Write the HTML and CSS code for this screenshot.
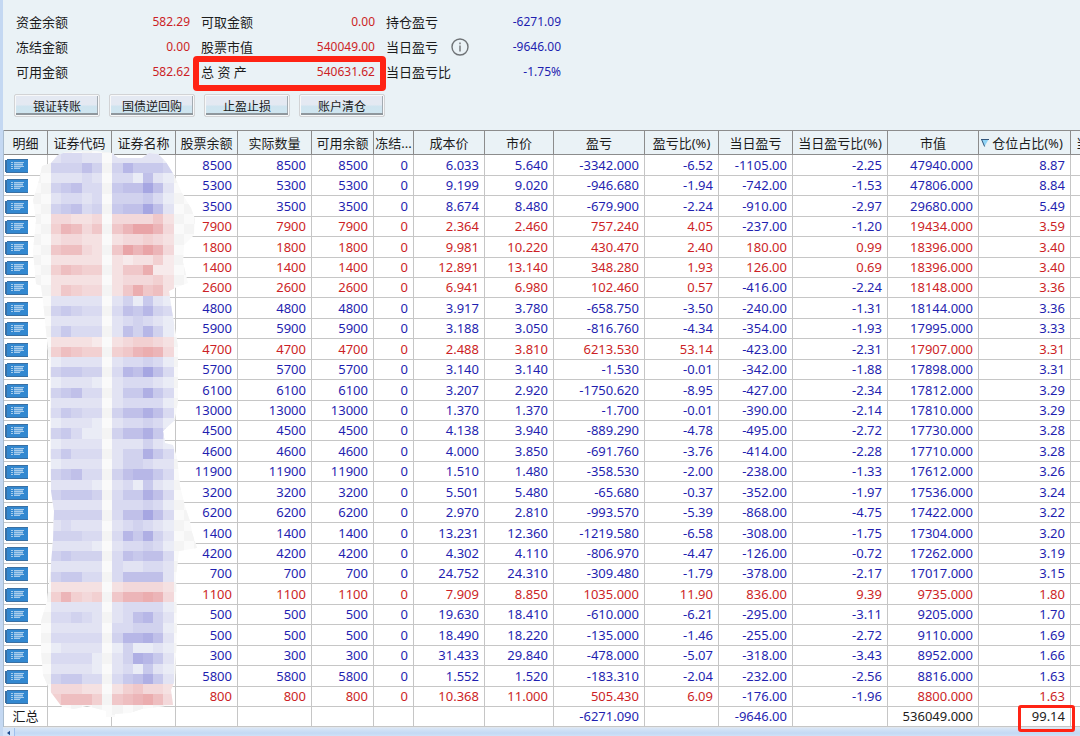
FILE: index.html
```
<!DOCTYPE html>
<html lang="zh-CN">
<head>
<meta charset="utf-8">
<title>资金股份</title>
<link rel="stylesheet" href="styles.css">
</head>
<body>
<svg class="defs" aria-hidden="true">
  <symbol id="detail" viewBox="0 0 23 14">
    <path fill="#3a70a3" d="M0 1h2V0h21v14H1v-1H0z"/>
    <path fill="#3388d0" d="M2 1h21v12H2z"/>
    <path fill="#a9cdec" d="M6 3h2v1H6zM6 5h2v1H6zM6 7h2v1H6zM6 9h2v1H6zM9 3h10v1H9zM9 5h9v1H9zM9 7h10v1H9zM9 9h6v1H9z"/>
    <path fill="#6aa8de" d="M9 4h9v1H9zM9 6h9v1H9zM9 8h7v1H9z"/>
  </symbol>
</svg>
<main class="panel">
  <dl class="summary">
    <div class="item"><dt>资金余额</dt><dd class="up">582.29</dd></div>
    <div class="item"><dt>可取金额</dt><dd class="up">0.00</dd></div>
    <div class="item"><dt>持仓盈亏</dt><dd class="down">-6271.09</dd></div>
    <div class="item"><dt>冻结金额</dt><dd class="up">0.00</dd></div>
    <div class="item"><dt>股票市值</dt><dd class="up">540049.00</dd></div>
    <div class="item"><dt>当日盈亏<svg class="info" viewBox="0 0 18 18" aria-hidden="true"><circle cx="9" cy="9" r="8" fill="none" stroke="#6f7376" stroke-width="1.4"/><path fill="#6f7376" d="M8.3 4.6h1.4v1.6H8.3zM8.3 7.5h1.4v6H8.3z"/></svg></dt><dd class="down">-9646.00</dd></div>
    <div class="item"><dt>可用金额</dt><dd class="up">582.62</dd></div>
    <div class="item marked"><dt>总 资 产</dt><dd class="up">540631.62</dd></div>
    <div class="item"><dt>当日盈亏比</dt><dd class="down">-1.75%</dd></div>
  </dl>
  <div class="actions">
    <button type="button">银证转账</button>
    <button type="button">国债逆回购</button>
    <button type="button">止盈止损</button>
    <button type="button">账户清仓</button>
  </div>
  <div class="holdings">
    <table>
      <colgroup>
        <col class="w44"><col class="w64"><col class="w64"><col class="w62"><col class="w74"><col class="w62"><col class="w40"><col class="w71"><col class="w69"><col class="w91"><col class="w74"><col class="w74"><col class="w95"><col class="w91"><col class="w92"><col>
      </colgroup>
      <thead>
        <tr><th>明细</th><th>证券代码</th><th>证券名称</th><th>股票余额</th><th>实际数量</th><th>可用余额</th><th>冻结...</th><th>成本价</th><th>市价</th><th>盈亏</th><th>盈亏比(%)</th><th>当日盈亏</th><th>当日盈亏比(%)</th><th>市值</th><th class="sorted"><svg class="sort" viewBox="0 0 8 8" aria-hidden="true"><path d="M.5.5h7L3.5 7.5z" fill="#8fd3f5"/><path d="M0 .5h8M.8 1l2.8 6.5" fill="none" stroke="#33577d"/></svg>仓位占比(%)</th><th class="cut">当</th></tr>
      </thead>
      <tbody id="rows"></tbody>
      <tfoot>
        <tr><td class="total">汇总</td><td></td><td></td><td></td><td></td><td></td><td></td><td></td><td></td><td class="down">-6271.090</td><td></td><td class="down">-9646.00</td><td></td><td>536049.000</td><td class="marked">99.14</td><td></td></tr>
      </tfoot>
    </table>
    <svg class="mosaic" id="mosaic" viewBox="0 0 170 570" aria-hidden="true">
      <clipPath id="smear"><path d="M21 12L28 4 36 1 66 0 82 2 88 7 112 7 119 2 128 3 136 11 144 24 152 42 161 57 165 68 164 84 154 94 153 111 158 132 145 137 139 140 142 160 148 195 148 235 148 250 145 269 133 280 135 292 143 294 147 306 150 335 155 355 160 370 162 381 167 397 149 400 146 425 147 480 145 529 141 539 143 554 112 558 100 562 85 563 85 566 76 566 76 560 57 555 44 558 32 556 20 540 13 524 11 500 11 470 17 450 20 424 23 389 24 360 21 340 20 290 20 220 16 180 13 150 11 135 6 133 3 100 6 69 3 49 9 29 12 15z"/></clipPath>
    </svg>
  </div>
  <div class="scroll"><button type="button" aria-label="向左滚动"><svg viewBox="0 0 4 6" aria-hidden="true"><path d="M4 0v6L0 3z" fill="#1d4a8c"/></svg></button></div>
</main>
<script src="app.js"></script>
</body>
</html>
```
FILE: styles.css
```
* { box-sizing: border-box; }

body {
  margin: 0;
  height: 100vh;
  overflow: hidden;
  background: #eaf2f6;
  color: #1c1c1c;
  font: 13px/20px "Noto Sans", "Noto Sans CJK SC", sans-serif;
}

.defs { display: none; }

.panel {
  display: flex;
  flex-direction: column;
  min-height: 100%;
  border-left: 3px solid #c4d8f2;
}

.up { color: #cc1f26; }
.down { color: #1f1fb0; }

.summary {
  display: grid;
  grid-template-columns: 174px 174px 175px;
  grid-auto-rows: 25px;
  column-gap: 11px;
  margin: 0;
  padding: 9px 13px 0;
}

.item {
  position: relative;
  display: flex;
  justify-content: space-between;
  align-items: center;
  white-space: nowrap;
}

.item dt {
  display: flex;
  align-items: center;
  gap: 13px;
}

.item dd { margin: 0; font-size: 12px; }

.info { width: 18px; height: 18px; }

.item.marked::after {
  content: "";
  position: absolute;
  inset: -3px -11px -7px -8px;
  border: 6px solid #ff2314;
  border-radius: 4px;
}

.actions {
  display: flex;
  gap: 9px;
  padding: 10px 11px 13px;
}

.actions button {
  width: 86px;
  height: 23px;
  padding: 0;
  border: 1px solid #d2d3d5;
  border-radius: 2px;
  background: linear-gradient(#e4e9f2 45%, #cfe4ef 55%, #cfe6f0);
  box-shadow: inset 0 0 0 1px #f7f8f9, inset 0 -3px 0 #8f979d, inset -2px 0 0 #a3abb2;
  color: #1c1c1c;
  font: 12px/20px "Noto Sans CJK SC", sans-serif;
}

.holdings {
  position: relative;
  border-left: 1px solid #a9bccf;
  background: #fff;
}

table {
  width: 100%;
  table-layout: fixed;
  border-collapse: separate;
  border-spacing: 0;
  border-top: 1px solid #8c8c8c;
}

.w40 { width: 40px; }
.w44 { width: 44px; }
.w62 { width: 62px; }
.w64 { width: 64px; }
.w69 { width: 69px; }
.w71 { width: 71px; }
.w74 { width: 74px; }
.w91 { width: 91px; }
.w92 { width: 92px; }
.w95 { width: 95px; }

th {
  height: 24px;
  padding: 0;
  border-right: 1px solid #8c8c8c;
  border-bottom: 1px solid #8c8c8c;
  background: #eaf2f6;
  font-weight: normal;
  white-space: nowrap;
  overflow: hidden;
}

th.sorted { position: relative; padding-left: 6px; }
th.cut { padding-left: 5px; text-align: left; border-right: 0; }

.sort {
  position: absolute;
  left: 2px;
  top: 8px;
  width: 8px;
  height: 8px;
}

td {
  height: 20px;
  padding: 0 5px 0 0;
  border-right: 1px solid #c6c6c6;
  border-bottom: 1px solid #c6c6c6;
  line-height: 19px;
  text-align: right;
}

td:last-child { border-right: 0; }

tbody tr:nth-child(7n+1) td,
tbody tr:nth-child(7n+3) td,
tbody tr:nth-child(7n+5) td { height: 21px; }

td.icon { padding: 1px 0 0 1px; text-align: left; }

.icon button {
  display: block;
  width: 23px;
  height: 14px;
  padding: 0;
  border: 0;
  background: none;
}

.icon svg { display: block; width: 23px; height: 14px; }

td.total { padding: 0; text-align: center; }

td.marked { position: relative; }

td.marked::after {
  content: "";
  position: absolute;
  inset: -2px -5px -6px 39px;
  border: 3px solid #ff2314;
  border-radius: 3px;
  z-index: 2;
}

.mosaic {
  position: absolute;
  left: 26px;
  top: 21px;
  width: 170px;
  height: 570px;
}

.scroll {
  flex: 1;
  display: flex;
  min-height: 10px;
  border-top: 1px solid #dfe6ee;
  background: linear-gradient(#d9e6f6, #c3d9f4 5px, #d6e6fa);
}

.scroll button {
  display: flex;
  align-items: flex-start;
  width: 12px;
  padding: 2px 4px;
  border: 0;
  border-right: 1px solid #9fc0ee;
  background: #d3e3f8;
}

.scroll svg { width: 4px; height: 6px; }
```
FILE: app.js
```
// quantity, cost, price, profit, profit %, day profit, day %, market value, weight
const holdings = `
8500 6.033 5.640 -3342.000 -6.52 -1105.00 -2.25 47940.000 8.87
5300 9.199 9.020 -946.680 -1.94 -742.00 -1.53 47806.000 8.84
3500 8.674 8.480 -679.900 -2.24 -910.00 -2.97 29680.000 5.49
7900 2.364 2.460 757.240 4.05 -237.00 -1.20 19434.000 3.59
1800 9.981 10.220 430.470 2.40 180.00 0.99 18396.000 3.40
1400 12.891 13.140 348.280 1.93 126.00 0.69 18396.000 3.40
2600 6.941 6.980 102.460 0.57 -416.00 -2.24 18148.000 3.36
4800 3.917 3.780 -658.750 -3.50 -240.00 -1.31 18144.000 3.36
5900 3.188 3.050 -816.760 -4.34 -354.00 -1.93 17995.000 3.33
4700 2.488 3.810 6213.530 53.14 -423.00 -2.31 17907.000 3.31
5700 3.140 3.140 -1.530 -0.01 -342.00 -1.88 17898.000 3.31
6100 3.207 2.920 -1750.620 -8.95 -427.00 -2.34 17812.000 3.29
13000 1.370 1.370 -1.700 -0.01 -390.00 -2.14 17810.000 3.29
4500 4.138 3.940 -889.290 -4.78 -495.00 -2.72 17730.000 3.28
4600 4.000 3.850 -691.760 -3.76 -414.00 -2.28 17710.000 3.28
11900 1.510 1.480 -358.530 -2.00 -238.00 -1.33 17612.000 3.26
3200 5.501 5.480 -65.680 -0.37 -352.00 -1.97 17536.000 3.24
6200 2.970 2.810 -993.570 -5.39 -868.00 -4.75 17422.000 3.22
1400 13.231 12.360 -1219.580 -6.58 -308.00 -1.75 17304.000 3.20
4200 4.302 4.110 -806.970 -4.47 -126.00 -0.72 17262.000 3.19
700 24.752 24.310 -309.480 -1.79 -378.00 -2.17 17017.000 3.15
1100 7.909 8.850 1035.000 11.90 836.00 9.39 9735.000 1.80
500 19.630 18.410 -610.000 -6.21 -295.00 -3.11 9205.000 1.70
500 18.490 18.220 -135.000 -1.46 -255.00 -2.72 9110.000 1.69
300 31.433 29.840 -478.000 -5.07 -318.00 -3.43 8952.000 1.66
5800 1.552 1.520 -183.310 -2.04 -232.00 -2.56 8816.000 1.63
800 10.368 11.000 505.430 6.09 -176.00 -1.96 8800.000 1.63`
  .trim().split("\n").map(line => line.split(" "));

const tone = value => value.startsWith("-") ? "down" : "up";
const cell = (text, name) => `<td class="${name}">${text}</td>`;

document.getElementById("rows").innerHTML = holdings.map(
  ([qty, cost, price, profit, rate, day, dayRate, value, weight]) => {
    const row = tone(profit);
    return "<tr>" +
      '<td class="icon"><button type="button" aria-label="明细"><svg><use href="#detail"/></svg></button></td><td></td><td></td>' +
      [qty, qty, qty, "0", cost, price, profit, rate].map(text => cell(text, row)).join("") +
      cell(day, tone(day)) + cell(dayRate, tone(dayRate)) +
      cell(value, row) + cell(weight, row) + "<td></td></tr>";
  }).join("");

// Shade levels of the masked code and name columns, upper and lower half of each row
const shades = `
12211.111110 33353.364443
11121.220510 34522.455851
12212.333420 34523.455851
22112.222241 36524.468862
12211.122321 45521.486862
11111.101130 35433.144700
11111.122231 14322.147451
11111.130410 34322.254632
11111.123210 24222.153630
11110.123321 35433.346762
01111.122320 34433.265852
01110.122210 34522.144742
11111.122220 24322.355752
01110.122320 34200.355741
01111.111310 24222.133742
01111.133211 34522.356642
11110.120410 34443.244752
11111.222320 33333.255852
12111.123210 33322.264731
11110.122320 34333.254552
11111.211221 34422.255551
11111.122221 36323.466762
11111.122220 22321.125631
11111.223330 22222.366751
01111.030010 22220.137641
11110.120410 34422.245741
22211.134221 35553.456752`.trim().split("\n");

const mix = (from, to, level) =>
  `rgb(${from.map((v, i) => Math.round(v + (to[i] - v) * level / 9)).join()})`;
const step = 10.22;
let tiles = '<path fill="#fafafa" d="M0 0h170v570H0z"/>';
const rect = (x, y, fill) =>
  `<rect x="${(x).toFixed(1)}" y="${(y).toFixed(1)}" width="10.3" height="10.3" fill="${fill}"/>`;

for (let r = -1; r < 55; r++) {
  for (let c = -3; c < 16; c++) {
    if ((r + c) % 2 === 0) tiles += rect(21 + c * step, 1.5 + r * step, "#f4f4f4");
  }
}
shades.forEach((pair, i) => {
  const red = tone(holdings[i][3]) === "up";
  pair.split(" ").forEach((half, k) => {
    [...half].forEach((level, c) => {
      if (level === ".") return;
      const fill = red
        ? mix([247, 234, 235], [231, 155, 158], level)
        : mix([234, 236, 246], [158, 157, 223], level);
      tiles += rect(21 + c * step, 1.5 + (2 * i + k) * step, fill);
    });
  });
});
document.getElementById("mosaic").insertAdjacentHTML(
  "beforeend", `<g clip-path="url(#smear)" shape-rendering="crispEdges">${tiles}</g>`);
```
